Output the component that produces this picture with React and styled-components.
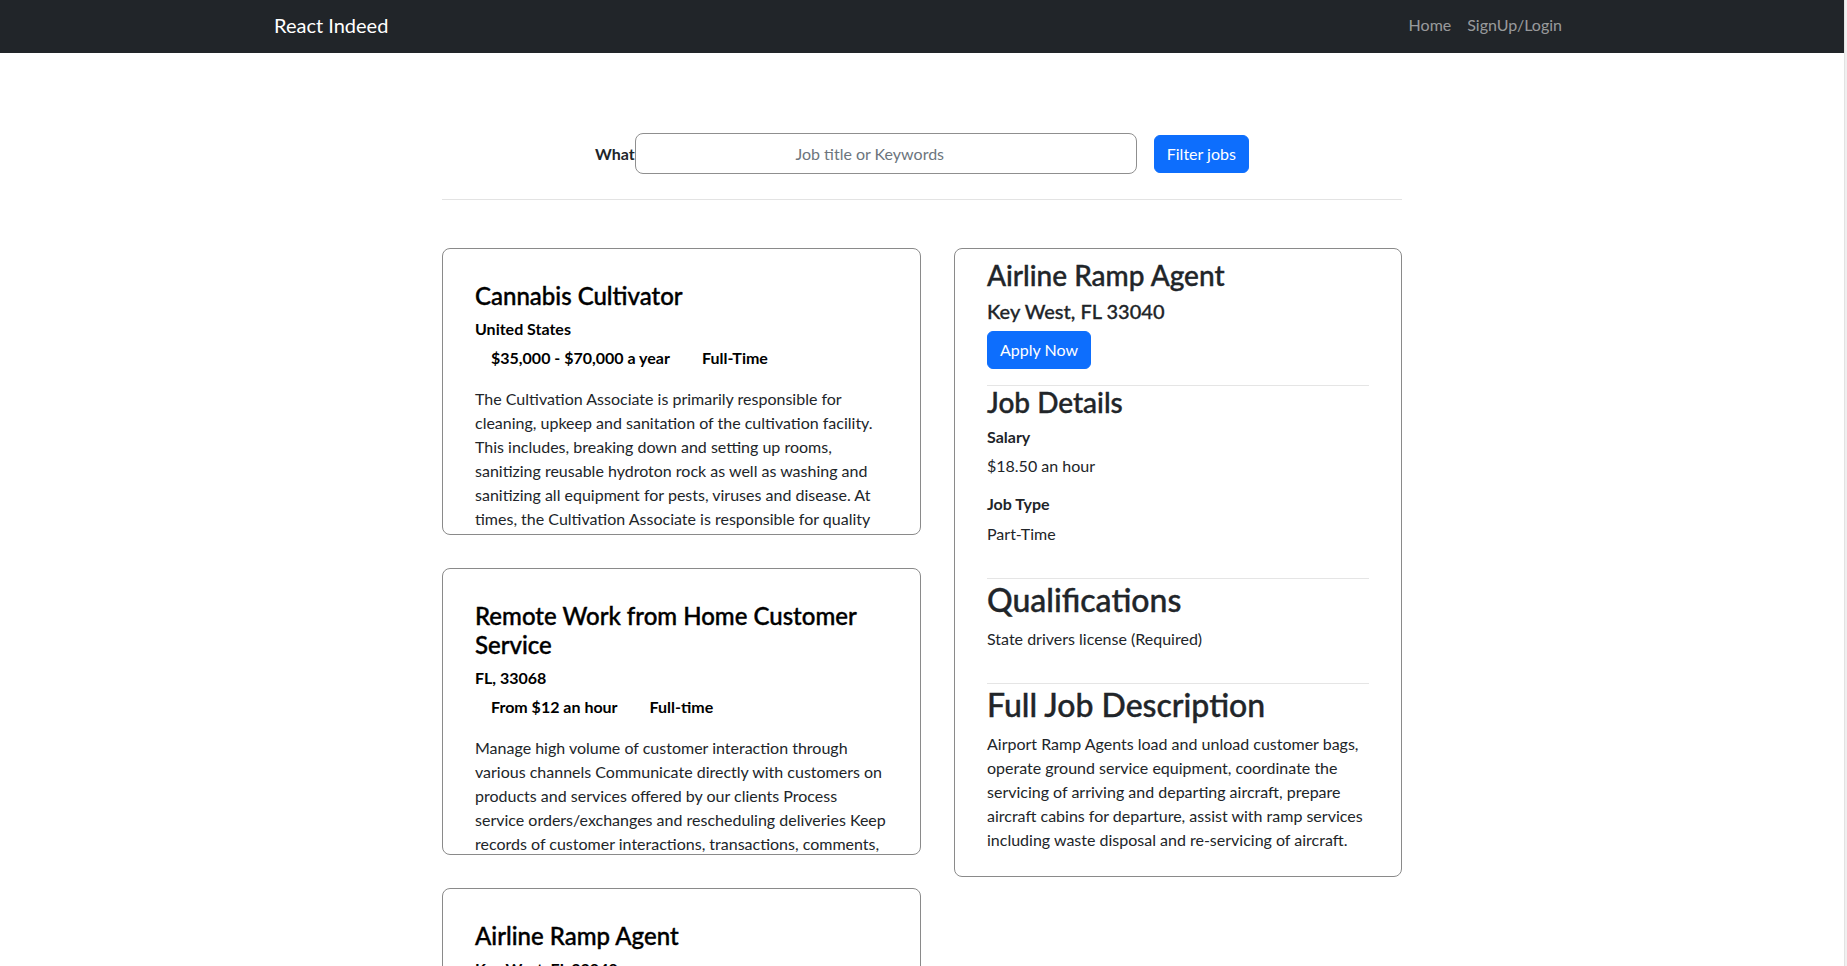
import React from 'react';
import styled, { createGlobalStyle } from 'styled-components';

const GlobalStyle = createGlobalStyle`
  html, body {
    margin: 0;
    overflow: hidden;
  }
  body {
    font-family: Lato, "Open Sans", sans-serif;
    font-size: 16px;
    line-height: 1.5;
    color: #212529;
    background: #fff;
  }
  * {
    box-sizing: border-box;
  }
`;

const Shell = styled.div`
  display: flex;
  min-height: 100vh;
`;

const Page = styled.div`
  flex: 1;
  min-width: 0;
`;

// thin strip of the browser scrollbar seen at the right edge
const ScrollTrack = styled.div`
  width: 3px;
  background: #f0f0f0;
  border-left: 1px solid #e2e2e2;
`;

const Navbar = styled.nav`
  background-color: #212529;
  height: 53px;
`;

const NavInner = styled.div`
  max-width: 1320px;
  height: 100%;
  margin: 0 auto;
  padding: 0 12px 3px;
  display: flex;
  align-items: center;
  justify-content: space-between;
`;

const Brand = styled.a`
  color: #fff;
  font-size: 20px;
  line-height: 30px;
  text-decoration: none;
`;

const NavLinks = styled.div`
  display: flex;
`;

const NavLink = styled.a`
  color: rgba(255, 255, 255, 0.55);
  padding: 0 8px;
  text-decoration: none;
`;

const Main = styled.main`
  width: 960px;
  margin: 0 auto;
  padding-top: 80px;
`;

const SearchRow = styled.form`
  display: flex;
  align-items: center;
  justify-content: center;
  gap: 17px;
`;

const Field = styled.label`
  display: flex;
  align-items: center;
  font-weight: 700;
`;

const SearchInput = styled.input`
  width: 502px;
  height: 41px;
  border: 1px solid #8f8f8f;
  border-radius: 8px;
  padding: 0 40px 0 8px;
  font: inherit;
  font-weight: 400;
  text-align: center;
  &::placeholder {
    color: #6c757d;
  }
`;

const Button = styled.button`
  background-color: #0d6efd;
  color: #fff;
  border: 1px solid #0d6efd;
  border-radius: 6px;
  height: 38px;
  padding: 0 12px;
  font: inherit;
  cursor: pointer;
`;

const ApplyButton = styled(Button)`
  align-self: flex-start;
`;

const Divider = styled.hr`
  border: 0;
  border-top: 1px solid #e3e3e3;
  margin: 25px 0 48px;
`;

const Columns = styled.div`
  display: flex;
  align-items: flex-start;
  gap: 33px;
`;

const JobList = styled.div`
  width: 479px;
  display: flex;
  flex-direction: column;
  gap: 33px;
`;

const JobCard = styled.article`
  height: 287px;
  border: 1px solid #8a8a8a;
  border-radius: 8px;
  padding: 33px 32px 32px;
  overflow: hidden;
`;

const CardTitle = styled.h4`
  margin: 0 0 8px;
  font-size: 24px;
  font-weight: 500;
  line-height: 1.2;
  color: #000;
  -webkit-text-stroke: 0.4px currentColor;
`;

const Location = styled.h6`
  margin: 0 0 8px;
  font-size: 16px;
  font-weight: 700;
  line-height: 1.2;
  color: #000;
`;

const MetaRow = styled.div`
  display: flex;
  margin-bottom: 17px;
  font-weight: 700;
  color: #000;
`;

const MetaItem = styled.span`
  padding: 0 16px;
`;

const Snippet = styled.p`
  margin: 0;
  line-height: 24px;
`;

const DetailCard = styled.section`
  width: 448px;
  display: flex;
  flex-direction: column;
  border: 1px solid #8a8a8a;
  border-radius: 8px;
  padding: 10px 32px 8px;
`;

const DetailTitle = styled.h3`
  margin: 0 0 6px;
  font-size: 28px;
  font-weight: 500;
  line-height: 1.2;
  -webkit-text-stroke: 0.4px currentColor;
`;

const DetailLocation = styled.h5`
  margin: 0 0 8px;
  font-size: 20px;
  font-weight: 500;
  line-height: 1.2;
  -webkit-text-stroke: 0.3px currentColor;
`;

const Rule = styled.hr`
  width: 100%;
  border: 0;
  border-top: 1px solid rgba(0, 0, 0, 0.1);
  margin: 16px 0 0;
`;

const SectionTitle = styled.h2`
  margin: ${(p) => (p.$small ? '0 0 8px' : '2px 0 8px')};
  font-size: ${(p) => (p.$small ? '28px' : '32px')};
  font-weight: 500;
  line-height: 1.2;
  -webkit-text-stroke: 0.4px currentColor;
`;

const FieldLabel = styled.h6`
  margin: 0 0 8px;
  font-size: 16px;
  font-weight: 700;
  line-height: 1.2;
`;

const FieldValue = styled.p`
  margin: 0 0 16px;
  line-height: 24px;
`;

const jobs = [
  {
    title: 'Cannabis Cultivator',
    location: 'United States',
    salary: '$35,000 - $70,000 a year',
    type: 'Full-Time',
    snippet:
      'The Cultivation Associate is primarily responsible for cleaning, upkeep and sanitation of the cultivation facility. This includes, breaking down and setting up rooms, sanitizing reusable hydroton rock as well as washing and sanitizing all equipment for pests, viruses and disease. At times, the Cultivation Associate is responsible for quality control of the plants and assisting with harvest.',
  },
  {
    title: 'Remote Work from Home Customer Service',
    location: 'FL, 33068',
    salary: 'From $12 an hour',
    type: 'Full-time',
    snippet:
      'Manage high volume of customer interaction through various channels Communicate directly with customers on products and services offered by our clients Process service orders/exchanges and rescheduling deliveries Keep records of customer interactions, transactions, comments, and complaints.',
  },
  {
    title: 'Airline Ramp Agent',
    location: 'Key West, FL 33040',
    salary: '$18.50 an hour',
    type: 'Part-Time',
    snippet:
      'Airport Ramp Agents load and unload customer bags, operate ground service equipment, coordinate the servicing of arriving and departing aircraft, prepare aircraft cabins for departure, assist with ramp services including waste disposal and re-servicing of aircraft.',
  },
];

const selected = jobs[2];

const App = () => {
  return (
    <Shell>
      <GlobalStyle />
      <Page>
        <Navbar>
          <NavInner>
            <Brand href="#">React Indeed</Brand>
            <NavLinks>
              <NavLink href="#">Home</NavLink>
              <NavLink href="#">SignUp/Login</NavLink>
            </NavLinks>
          </NavInner>
        </Navbar>

        <Main>
          <SearchRow onSubmit={(e) => e.preventDefault()}>
            <Field>
              What
              <SearchInput placeholder="Job title or Keywords" />
            </Field>
            <Button type="submit">Filter jobs</Button>
          </SearchRow>
          <Divider />

          <Columns>
            <JobList>
              {jobs.map((job) => (
                <JobCard key={job.title}>
                  <CardTitle>{job.title}</CardTitle>
                  <Location>{job.location}</Location>
                  <MetaRow>
                    <MetaItem>{job.salary}</MetaItem>
                    <MetaItem>{job.type}</MetaItem>
                  </MetaRow>
                  <Snippet>{job.snippet}</Snippet>
                </JobCard>
              ))}
            </JobList>

            <DetailCard>
              <DetailTitle>{selected.title}</DetailTitle>
              <DetailLocation>{selected.location}</DetailLocation>
              <ApplyButton type="button">Apply Now</ApplyButton>
              <Rule />
              <SectionTitle $small>Job Details</SectionTitle>
              <FieldLabel>Salary</FieldLabel>
              <FieldValue>{selected.salary}</FieldValue>
              <FieldLabel>Job Type</FieldLabel>
              <FieldValue>{selected.type}</FieldValue>
              <Rule />
              <SectionTitle>Qualifications</SectionTitle>
              <FieldValue>State drivers license (Required)</FieldValue>
              <Rule />
              <SectionTitle>Full Job Description</SectionTitle>
              <FieldValue>{selected.snippet}</FieldValue>
            </DetailCard>
          </Columns>
        </Main>
      </Page>
      <ScrollTrack />
    </Shell>
  );
};

export default App;
